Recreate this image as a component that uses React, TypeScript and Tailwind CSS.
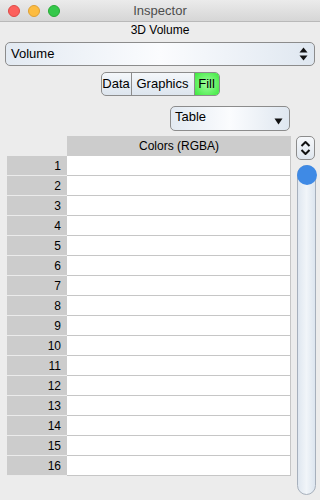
import React from 'react';

const rows = Array.from({ length: 16 }, (_, i) => i + 1);

function UpDown({ className }: { className?: string }) {
  return (
    <svg width="9" height="14" viewBox="0 0 9 14" className={className}>
      <path d="M4.5 0.5 L8.5 5.5 L0.5 5.5 Z" fill="#111" />
      <path d="M4.5 13.5 L8.5 8.5 L0.5 8.5 Z" fill="#111" />
    </svg>
  );
}

function Chevrons() {
  return (
    <svg width="11" height="16" viewBox="0 0 11 16">
      <path d="M1.5 6 L5.5 2 L9.5 6" fill="none" stroke="#111" strokeWidth="2" strokeLinejoin="round" />
      <path d="M1.5 10 L5.5 14 L9.5 10" fill="none" stroke="#111" strokeWidth="2" strokeLinejoin="round" />
    </svg>
  );
}

function Light({ color, ring }: { color: string; ring: string }) {
  return <div className={`w-[12px] h-[12px] rounded-full border ${color} ${ring}`} />;
}

export default function App() {
  return (
    <div
      className="w-[320px] h-[500px] bg-[#ececec] overflow-hidden flex flex-col text-black"
      style={{ fontFamily: '"Liberation Sans", Arial, sans-serif' }}
    >
      {/* Title bar */}
      <div className="h-[22px] shrink-0 grid grid-cols-[1fr_auto_1fr] items-center px-[8px] bg-gradient-to-b from-[#ebebeb] to-[#d6d6d6] border-b border-[#b9b9b9]">
        <div className="flex gap-[8px] items-center">
          <Light color="bg-[#fc605c]" ring="border-[#de4a46]" />
          <Light color="bg-[#fdbc40]" ring="border-[#dea034]" />
          <Light color="bg-[#34c84a]" ring="border-[#27aa35]" />
        </div>
        <div className="text-[13px] text-[#4d4d4d] leading-none">Inspector</div>
        <div />
      </div>

      <div className="text-center text-[12px] leading-[14px] mt-[1px]">3D Volume</div>

      {/* Volume popup */}
      <div className="mx-[5px] mt-[5px] h-[24px] rounded-[5px] border border-[#8c8c8c] bg-gradient-to-r from-[#e3eaf2] via-[#fbfcfe] to-[#dfe7f0] flex items-center justify-between pl-[5px] pr-[6px] text-[13px]">
        <span>Volume</span>
        <UpDown />
      </div>

      {/* Segmented control */}
      <div className="mt-[6px] flex justify-center">
        <div className="flex h-[24px] rounded-[5px] border border-[#8c8c8c] overflow-hidden text-[13px] bg-gradient-to-b from-[#f4f7fa] to-[#dde5ee]">
          <div className="w-[30px] flex items-center justify-center border-r border-[#8c8c8c]">Data</div>
          <div className="w-[63px] flex items-center justify-center border-r border-[#8c8c8c]">Graphics</div>
          <div className="w-[24px] flex items-center justify-center bg-[radial-gradient(circle,#a0ffa0,#3ee83e)]">Fill</div>
        </div>
      </div>

      {/* Table popup */}
      <div className="mt-[10px] flex justify-end pr-[30px]">
        <div className="w-[120px] h-[25px] rounded-[5px] border border-[#8c8c8c] bg-gradient-to-r from-[#e3eaf2] via-[#fbfcfe] to-[#dfe7f0] flex items-center justify-between pl-[4px] pr-[6px] text-[13px]">
          <span className="-mt-[3px]">Table</span>
          <svg width="9" height="7" viewBox="0 0 9 7" className="mt-[6px]">
            <path d="M0.5 0.5 L8.5 0.5 L4.5 6.5 Z" fill="#111" />
          </svg>
        </div>
      </div>

      {/* Table and slider */}
      <div className="mt-[5px] flex">
        <div className="ml-[7px] w-[284px] flex flex-col text-[12px]">
          <div className="flex h-[20px]">
            <div className="w-[60px]" />
            <div className="flex-1 bg-[#cccccc] flex items-center justify-center">Colors (RGBA)</div>
          </div>
          {rows.map((n) => (
            <div key={n} className="flex h-[20px]">
              <div className="w-[60px] bg-[#cccccc] border-b border-[#ebebeb] flex items-center justify-end pr-[6px]">
                {n}
              </div>
              <div className="flex-1 bg-white border-b border-r border-[#c6c6c6]" />
            </div>
          ))}
        </div>

        <div className="ml-[5px] w-[20px] flex flex-col items-start">
          <div className="w-[19px] h-[24px] rounded-[5px] border border-[#8c8c8c] bg-gradient-to-b from-[#f6f8fb] to-[#dfe6ee] flex items-center justify-center">
            <Chevrons />
          </div>
          <div className="mt-[5px] ml-[1px] w-[19px] h-[330px] rounded-full border border-[#a7b0bc] bg-gradient-to-r from-[#dfe7f0] via-[#f1f5f9] to-[#dce5ef] flex flex-col items-center">
            <div className="w-[20px] h-[20px] -mt-[1px] rounded-full bg-[#3f8ae5] shrink-0" />
          </div>
        </div>
      </div>
    </div>
  );
}
